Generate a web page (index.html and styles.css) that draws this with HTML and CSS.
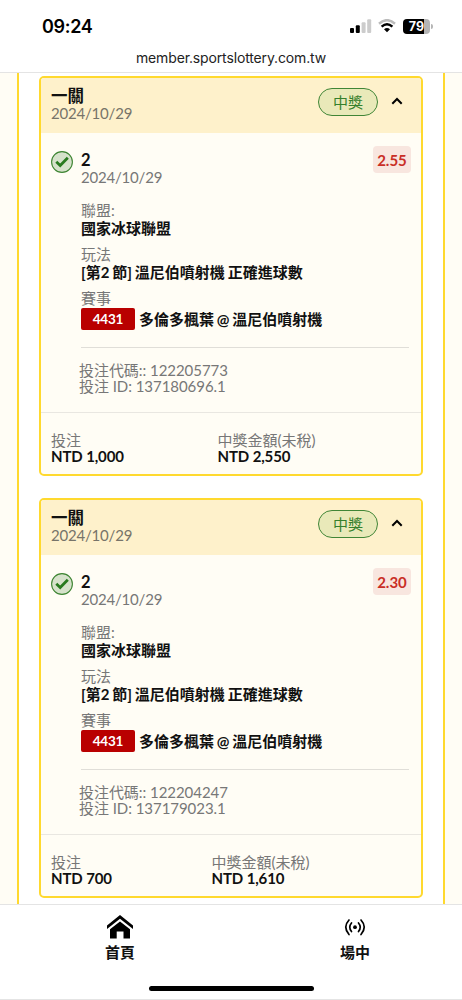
FILE: index.html
```html
<!DOCTYPE html>
<html lang="zh-Hant">
<head>
<meta charset="utf-8">
<meta name="viewport" content="width=device-width, initial-scale=1">
<title>投注紀錄</title>
<link rel="stylesheet" href="styles.css">
</head>
<body>
<div class="phone">
  <header class="top">
    <div class="status">
      <span class="clock">09:24</span>
      <div class="indicators">
        <svg class="signal" width="22" height="14" viewBox="0 0 22 14"><rect x="0" y="9" width="4" height="5" rx="1"/><rect x="5.8" y="6.3" width="4" height="7.7" rx="1"/><g fill="#ccc"><rect x="11.6" y="3.3" width="4" height="10.7" rx="1"/><rect x="17.2" y="0.3" width="4" height="13.7" rx="1"/></g></svg>
        <svg class="wifi" width="18" height="14" viewBox="0 0 18 14" fill="none"><path d="M1 4.7Q9-2.3 17 4.7" stroke="#bbb" stroke-width="2.5"/><path d="M3.6 7.6Q9 3 14.4 7.6" stroke="#000" stroke-width="2.5"/><path d="M6 10.2Q9 7.8 12 10.2L9 13.3Z" fill="#000"/></svg>
        <div class="battery"><span class="level">79</span></div>
      </div>
    </div>
    <div class="url">member.sportslottery.com.tw</div>
  </header>

  <main class="page">
    <div class="column">
      <article class="card">
        <header class="card-head">
          <div><h2 class="title">一關</h2><p class="date">2024/10/29</p></div>
          <span class="pill">中獎</span>
          <svg class="chevron" width="12" height="8" viewBox="0 0 12 8" fill="none" stroke="#000" stroke-width="2"><path d="M1.3 6.7L6 2L10.7 6.7"/></svg>
        </header>
        <section class="bet">
          <svg class="check" width="22" height="22" viewBox="0 0 22 22"><circle cx="11" cy="11" r="10.4" fill="#d6e2cb" stroke="#3d8432" stroke-width="1.1"/><path d="M5.3 10.8L9.2 14.5L16.8 6.8" fill="none" stroke="#287a1e" stroke-width="2.8"/></svg>
          <div class="detail">
            <div class="pick-row">
              <div><h3 class="pick">2</h3><p class="pick-date">2024/10/29</p></div>
              <span class="odds">2.55</span>
            </div>
            <dl class="facts">
              <dt>聯盟:</dt><dd>國家冰球聯盟</dd>
              <dt>玩法</dt><dd>[第2 節] 溫尼伯噴射機 正確進球數</dd>
              <dt>賽事</dt><dd class="event"><span class="tag">4431</span>多倫多楓葉 @ 溫尼伯噴射機</dd>
            </dl>
            <div class="codes"><p>投注代碼:: 122205773</p><p>投注 ID: 137180696.1</p></div>
          </div>
        </section>
        <footer class="totals">
          <div><p class="label">投注</p><p class="amount">NTD 1,000</p></div>
          <div><p class="label">中獎金額(未稅)</p><p class="amount">NTD 2,550</p></div>
        </footer>
      </article>

      <article class="card">
        <header class="card-head">
          <div><h2 class="title">一關</h2><p class="date">2024/10/29</p></div>
          <span class="pill">中獎</span>
          <svg class="chevron" width="12" height="8" viewBox="0 0 12 8" fill="none" stroke="#000" stroke-width="2"><path d="M1.3 6.7L6 2L10.7 6.7"/></svg>
        </header>
        <section class="bet">
          <svg class="check" width="22" height="22" viewBox="0 0 22 22"><circle cx="11" cy="11" r="10.4" fill="#d6e2cb" stroke="#3d8432" stroke-width="1.1"/><path d="M5.3 10.8L9.2 14.5L16.8 6.8" fill="none" stroke="#287a1e" stroke-width="2.8"/></svg>
          <div class="detail">
            <div class="pick-row">
              <div><h3 class="pick">2</h3><p class="pick-date">2024/10/29</p></div>
              <span class="odds">2.30</span>
            </div>
            <dl class="facts">
              <dt>聯盟:</dt><dd>國家冰球聯盟</dd>
              <dt>玩法</dt><dd>[第2 節] 溫尼伯噴射機 正確進球數</dd>
              <dt>賽事</dt><dd class="event"><span class="tag">4431</span>多倫多楓葉 @ 溫尼伯噴射機</dd>
            </dl>
            <div class="codes"><p>投注代碼:: 122204247</p><p>投注 ID: 137179023.1</p></div>
          </div>
        </section>
        <footer class="totals totals-narrow">
          <div><p class="label">投注</p><p class="amount">NTD 700</p></div>
          <div><p class="label">中獎金額(未稅)</p><p class="amount">NTD 1,610</p></div>
        </footer>
      </article>
    </div>
  </main>

  <nav class="tabs">
    <div class="tab-row">
      <a class="tab"><svg width="28" height="26" viewBox="0 0 28 26"><path d="M1 11.6L14 1L27 11.6V15L14 4.8L1 15Z"/><path d="M4 15.2L14 7.6L24 15.2V24.5H17.5V17.5H10.7V24.5H4Z"/></svg><span>首頁</span></a>
      <a class="tab"><svg width="28" height="26" viewBox="0 0 28 26" fill="none" stroke="#000" stroke-width="1.7" stroke-linecap="round"><path d="M8 6Q1.5 13 8 20.5M20 6Q26.5 13 20 20.5M10.5 9Q7 13.2 10.5 17.5M17.5 9Q21 13.2 17.5 17.5"/><circle cx="14" cy="13.2" r="1.9" fill="#000" stroke="none"/></svg><span>場中</span></a>
    </div>
    <div class="home-bar"></div>
  </nav>
</div>
</body>
</html>
```
FILE: styles.css
```css
* { box-sizing: border-box; }
body, h2, h3, p, dl, dd { margin: 0; }
body {
  font-family: Lato, "Noto Sans CJK TC", sans-serif;
  font-size: 15px;
  color: #111;
  background: #fff;
}
.phone { height: 1000px; display: flex; flex-direction: column; overflow: hidden; }

.top { height: 73px; flex: none; border-bottom: 1px solid #e4e4e4; font-family: Inter, sans-serif; }
.status { display: flex; justify-content: space-between; padding: 15px 29px 0 42px; height: 48px; }
.clock { font-size: 18px; font-weight: 600; line-height: 24px; color: #000; letter-spacing: -0.3px; }
.indicators { display: flex; align-items: center; height: 22px; }
.wifi { margin: 0 7px 0 6px; }
.battery {
  position: relative; width: 27px; height: 15px; margin-right: 3px; border-radius: 4px;
  background: linear-gradient(90deg, #000 79%, #b5b5b5 79%);
  color: #fff; font-size: 12.5px; font-weight: 700; line-height: 15px; text-align: center;
}
.battery::after {
  content: ""; position: absolute; right: -2.5px; top: 5px;
  width: 1.5px; height: 5px; border-radius: 0 2px 2px 0; background: #b5b5b5;
}
.url { text-align: center; font-size: 14px; line-height: 20px; color: #222; letter-spacing: -0.14px; }

.page { flex: 1; min-height: 0; overflow: hidden; display: flex; background: #fffdf5; padding: 0 17px; }
.column { flex: 1; height: 850px; border: solid #ffd92e; border-width: 0 2px; background: #fff; padding: 3px 20px 0; }
.card { height: 400px; margin-bottom: 22px; border: 2px solid #ffd92e; border-radius: 5px; background: #fffdf5; overflow: hidden; display: flex; flex-direction: column; }
.card-head { display: flex; height: 55px; flex: none; background: #fef1cb; padding: 10px 17px 0 10px; }
.title { font-size: 16.5px; line-height: 17px; font-weight: 700; }
.date { line-height: 17px; color: #777469; letter-spacing: -0.2px; }
.pill { width: 60px; height: 28px; margin-left: auto; border: 1px solid #408536; border-radius: 14px; background: #e9e9b9; color: #35802c; text-align: center; line-height: 27px; }
.chevron { margin: 9px 0 0 13px; }
.card-head { padding-right: 18px; }
.pill { margin-right: 0; position: relative; left: 0; }

.bet { display: flex; height: 279px; flex: none; padding: 13px 12px 0 10px; }
.check { flex: none; margin: 5px 8px 0 0; }
.detail { flex: 1; }
.pick-row { display: flex; justify-content: space-between; height: 54px; padding: 6px 0 0; }
.pick { font-size: 16.5px; line-height: 17px; }
.pick-date { line-height: 17px; color: #777; letter-spacing: -0.2px; }
.odds { width: 38px; height: 27px; margin: -6px -2px 0 0; border-radius: 4px; background: #f8e6df; color: #c92e26; font-weight: 700; text-align: center; line-height: 28px; }
.facts { height: 148px; padding-top: 1px; border-bottom: 1px solid #e0ded8; }
dt { line-height: 18px; color: #777; }
dd { line-height: 18px; font-weight: 700; margin-bottom: 8px; word-spacing: -0.8px; }
.event { display: flex; align-items: center; line-height: 22px; white-space: nowrap; margin-top: 1px; }
.tag { width: 54px; height: 22px; margin-right: 4px; border-radius: 2px; background: #b90000; color: #fff; text-align: center; font-size: 13.5px; line-height: 23px; letter-spacing: -0.2px; }
.codes { margin: 14px 0 0 -2px; line-height: 16px; color: #777; letter-spacing: -0.05px; }

.totals { display: grid; grid-template-columns: 166.5px 1fr; height: 62px; border-top: 1px solid #e9e7e1; padding: 19px 10px 0; }
.totals-narrow { grid-template-columns: 160.5px 1fr; }
.label { line-height: 16px; color: #777; }
.amount { line-height: 17px; font-weight: 700; letter-spacing: -0.12px; }

.tabs { height: 96px; flex: none; border-top: 1px solid #e4e4e4; border-bottom: 1px solid #e4e4e4; background: #fff; }
.tab-row { display: flex; justify-content: space-between; padding: 9px 67px 0 80px; height: 81px; }
.tab { display: flex; flex-direction: column; align-items: center; width: 80px; font-weight: 700; line-height: 24px; color: #111; }
.home-bar { width: 165px; height: 5px; margin: 0 auto; border-radius: 3px; background: #000; }
```
